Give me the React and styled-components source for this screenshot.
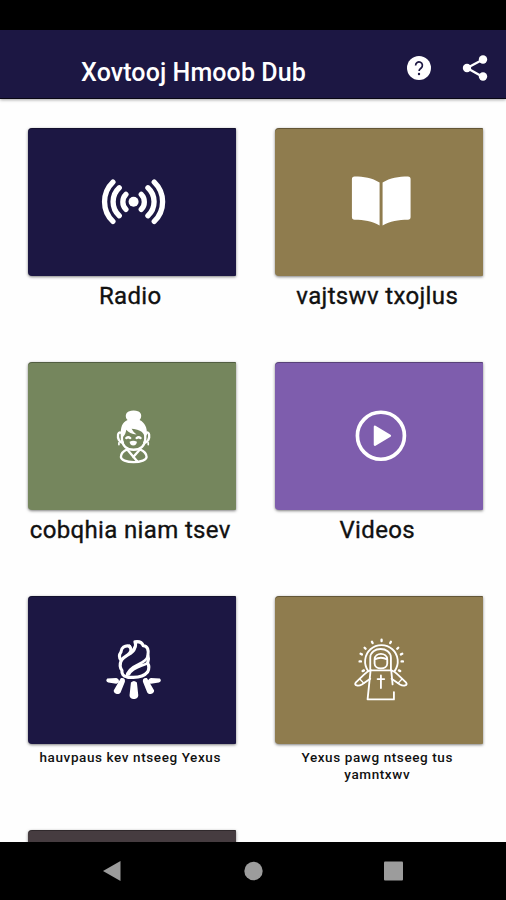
import React from "react";
import styled, { createGlobalStyle } from "styled-components";

const GlobalStyle = createGlobalStyle`
    * {
        box-sizing: border-box;
        margin: 0;
    }

    body {
        background-color: #fff;
        font-family: Roboto, "Liberation Sans", sans-serif;
        overflow: hidden;
    }
`;

const Screen = styled.div`
    display: flex;
    flex-direction: column;
    width: 506px;
    height: 900px;
    background-color: #fefefe;
`;

const StatusBar = styled.div`
    flex: none;
    height: 30px;
    background-color: #000;
`;

const Header = styled.header`
    display: flex;
    flex: none;
    align-items: center;
    height: 69px;
    padding: 0 18px 0 81px;
    background-color: #1c1743;
    border-bottom: 1px solid #090714;
    box-shadow: 0 1px 3px rgba(0, 0, 0, 0.35);
`;

const Title = styled.h1`
    flex: 1;
    padding-top: 17px;
    color: #fff;
    font-size: 25px;
    font-weight: 500;
    line-height: 28px;
    letter-spacing: 0.1px;
    white-space: nowrap;
`;

const Action = styled.button`
    display: flex;
    margin-left: 30px;
    padding: 7px 0 0;
    border: none;
    background-color: transparent;
`;

const Grid = styled.main`
    display: grid;
    flex: 1;
    grid-template-columns: 207.5px 207.5px;
    grid-auto-rows: 234px;
    column-gap: 39.5px;
    min-height: 0;
    padding: 29.4px 0 0 28px;
    overflow: hidden;
`;

const Tile = styled.div`
    display: flex;
    flex-direction: column;
    align-items: center;
`;

const Card = styled.div`
    display: flex;
    flex: none;
    align-items: center;
    justify-content: center;
    width: 100%;
    height: 148px;
    border-radius: 4px 1px 1px 4px;
    background-color: ${(props) => props.$color};
    box-shadow: 0 1px 3px rgba(0, 0, 0, 0.5), inset 0 1px 0 rgba(0, 0, 0, 0.3);
`;

const Label = styled.p`
    width: 198px;
    margin-left: -3px;
    padding-top: ${(props) => (props.$small ? "5px" : "6px")};
    color: #111;
    font-size: ${(props) => (props.$small ? "13.5px" : "24px")};
    font-weight: ${(props) => (props.$small ? 500 : 400)};
    line-height: ${(props) => (props.$small ? "17px" : "28px")};
    letter-spacing: ${(props) => (props.$small ? "0.6px" : "0.35px")};
    text-align: center;
    white-space: ${(props) => (props.$small ? "normal" : "nowrap")};
    -webkit-text-stroke: ${(props) => (props.$small ? "0" : "0.35px #111")};
    display: flex;
    justify-content: center;
`;

const NavBar = styled.nav`
    display: flex;
    flex: none;
    align-items: center;
    justify-content: space-between;
    height: 58px;
    padding: 0 102px;
    background-color: #000;
`;

const HelpIcon = () => (
    <svg width="26" height="26" viewBox="0 0 26 26" fill="none">
        <circle cx="13" cy="13" r="12" fill="#fff" />
        <path d="M9.6 10.4a3.4 3.4 0 1 1 5.6 2.6c-1.2 1-2.1 1.6-2.1 3" stroke="#1c1743" strokeWidth="1.7" />
        <circle cx="13" cy="19" r="1.2" fill="#1c1743" />
    </svg>
);

const ShareIcon = () => (
    <svg width="26" height="26" viewBox="0 0 26 26" fill="#fff">
        <path d="M21 4.5L5 13l16 9" fill="none" stroke="#fff" strokeWidth="2.3" />
        <circle cx="21" cy="4.5" r="4.2" />
        <circle cx="5" cy="13" r="4.2" />
        <circle cx="21" cy="21.5" r="4.2" />
    </svg>
);

const RadioIcon = () => (
    <svg width="88" height="88" viewBox="-6.75 -35.25 264 264" fill="none" stroke="#fff" strokeWidth="16" strokeLinecap="round">
        <circle cx="130" cy="96" r="15" fill="#fff" stroke="none" />
        <path d="M68 37a82 82 0 0 0 0 118M87 54a57 57 0 0 0 0 84M107 74a32 32 0 0 0 0 45" />
        <path d="M192 37a82 82 0 0 1 0 118M173 54a57 57 0 0 1 0 84M153 74a32 32 0 0 1 0 45" />
    </svg>
);

const BookIcon = () => (
    <svg width="88" height="88" viewBox="-15.75 -20.25 264 264" fill="#fff">
        <path d="M43 35c28 0 52 4 75 18v129c-22-13-47-17-75-17q-8 0-8-8V43q0-8 8-8z" />
        <path d="M203 35c-28 0-53 4-76 18v129c22-13 48-17 76-17q8 0 8-8V43q0-8-8-8z" />
    </svg>
);

const WomanIcon = () => (
    <svg width="88" height="88" viewBox="-36.75 -23.25 264 264" fill="none" stroke="#fff" strokeWidth="7" strokeLinecap="round" strokeLinejoin="round">
        <path fill="#fff" stroke="none" d="M82 61c-8-8-7-22 3-26q15-6 30 0c10 5 10 18 3 26 16 8 23 22 22 45l-7 4c-3-11-11-17-22-20q-11-3-17-3 4 9 15 17c-14-1-25-6-31-14-1 9-4 16-9 21l-7-3c-2-25 4-40 20-47z" />
        <path d="M65 100v18c0 19 14 32 35 32s35-13 35-32v-18" />
        <path d="M62 99c-10-4-11 13-6 22 3 6 8 8 12 7M138 99c10-4 11 13 6 22-3 6-8 8-12 7" />
        <path d="M56 129v6M144 129v6" strokeWidth="5" />
        <path d="M78 115q6-5 12 0M109 115q6-5 12 0" />
        <path d="M88 126q11-6 22 0-1 11-11 11t-11-11z" fill="#fff" stroke="none" />
        <path d="M81 149c-12 5-19 13-19 23 0 8 16 15 38 15s39-7 39-15c0-10-8-18-20-23M81 149l29 35M119 149l-20 23" />
    </svg>
);

const PlayIcon = () => (
    <svg width="88" height="88" viewBox="-30.75 -23.25 264 264">
        <circle cx="107" cy="108" r="70.5" fill="none" stroke="#fff" strokeWidth="11" />
        <path d="M89 81l45 27-45 27z" fill="#fff" stroke="#fff" strokeWidth="7" strokeLinejoin="round" />
    </svg>
);

const FireIcon = () => (
    <svg width="88" height="88" viewBox="-21.75 -11.25 264 264" fill="none" stroke="#fff" strokeWidth="9.5" strokeLinecap="round" strokeLinejoin="round">
        <path d="M102 49c-13-3-24 5-25 18-6 8-5 18 1 25-5 12-4 22 2 30-1 11 5 18 14 19 6 3 13 2 20 2 19 0 35-6 43-16 5-10 5-19 0-27 3-8 4-15 1-23 3-17-1-28-14-29-3-9-12-14-25-12 3 7 3 13-1 19" />
        <path d="M102 49c10 11 4 20-4 26-8 5-15 9-20 17M118 55c-2 10-9 14-20 20" />
        <path d="M158 78c-4 15-16 20-29 26-18 8-33 18-35 37M157 100c-18 11-43 10-56 34" strokeWidth="8" />
        <path fill="#fff" stroke="none" d="M107 158q9-9 18 0l4 38c1 16-27 16-26 0zM77 145q14-2 12 11l-13 32c-8 11-26 0-19-9zM155 145q-14-2-12 11l13 32c8 11 26 0 19-9zM36 146l27-1c11 3 11 14 0 17l-24-4q-10-5-3-12zM194 146l-27-1c-11 3-11 14 0 17l24-4q10-5 3-12z" />
    </svg>
);

const JesusIcon = () => (
    <svg width="88" height="88" viewBox="-15.75 -11.25 264 264" fill="none" stroke="#fff" strokeWidth="5.5" strokeLinecap="round" strokeLinejoin="round">
        <path d="M84 124a49 49 0 1 1 79 0" />
        <path d="M90 119V84c0-35 62-35 62 0v35" />
        <path d="M103 89q19-10 38 0v12c0 20-38 20-38 0zM103 89c1-22 37-22 38 0" />
        <path d="M92 121q-11 3-20 13l-25 24c-8 10 8 12 18 6l25-17M152 121q11 3 20 13l25 24c8 10-8 12-18 6l-25-17" />
        <path d="M58 147l13 14M186 147l-13 14" strokeWidth="4" />
        <path d="M91 122h62M91 122l-9 87h79v-22M153 122l4 42" />
        <path d="M122 137v38M112 148h20" />
        <path d="M124 30v4M95 36l2 4M152 36l-2 4M73 54l3 3M174 54l-3 3M58 95h4M184 95h4M61 72l4 2M186 72l-4 2M67 124l4-2M180 124l-4-2" strokeWidth="7" />
    </svg>
);

const tiles = [
    { label: "Radio", color: "#1c1743", icon: <RadioIcon /> },
    { label: "vajtswv txojlus", color: "#8f7c4e", icon: <BookIcon /> },
    { label: "cobqhia niam tsev", color: "#75865d", icon: <WomanIcon /> },
    { label: "Videos", color: "#7e5dad", icon: <PlayIcon /> },
    { label: "hauvpaus kev ntseeg Yexus", color: "#1c1743", icon: <FireIcon />, small: true },
    { label: "Yexus pawg ntseeg tus yamntxwv", color: "#8f7c4e", icon: <JesusIcon />, small: true },
    { label: "", color: "#463c40" },
];

const App = () => (
    <>
        <GlobalStyle />
        <Screen>
            <StatusBar />
            <Header>
                <Title>Xovtooj Hmoob Dub</Title>
                <Action aria-label="Help"><HelpIcon /></Action>
                <Action aria-label="Share"><ShareIcon /></Action>
            </Header>
            <Grid>
                {tiles.map(({ label, color, icon, small }, index) => (
                    <Tile key={index}>
                        <Card $color={color}>{icon}</Card>
                        {label && <Label $small={small}>{label}</Label>}
                    </Tile>
                ))}
            </Grid>
            <NavBar>
                <svg width="22" height="22" viewBox="0 0 22 22" fill="#9c9c9c">
                    <path d="M1 11L18.5 1v20z" />
                </svg>
                <svg width="22" height="22" viewBox="0 0 22 22" fill="#9c9c9c">
                    <circle cx="11.5" cy="11" r="9.2" />
                </svg>
                <svg width="22" height="22" viewBox="0 0 22 22" fill="#9c9c9c">
                    <rect x="2" y="1.5" width="19" height="19" rx="1" />
                </svg>
            </NavBar>
        </Screen>
    </>
);

export default App;
